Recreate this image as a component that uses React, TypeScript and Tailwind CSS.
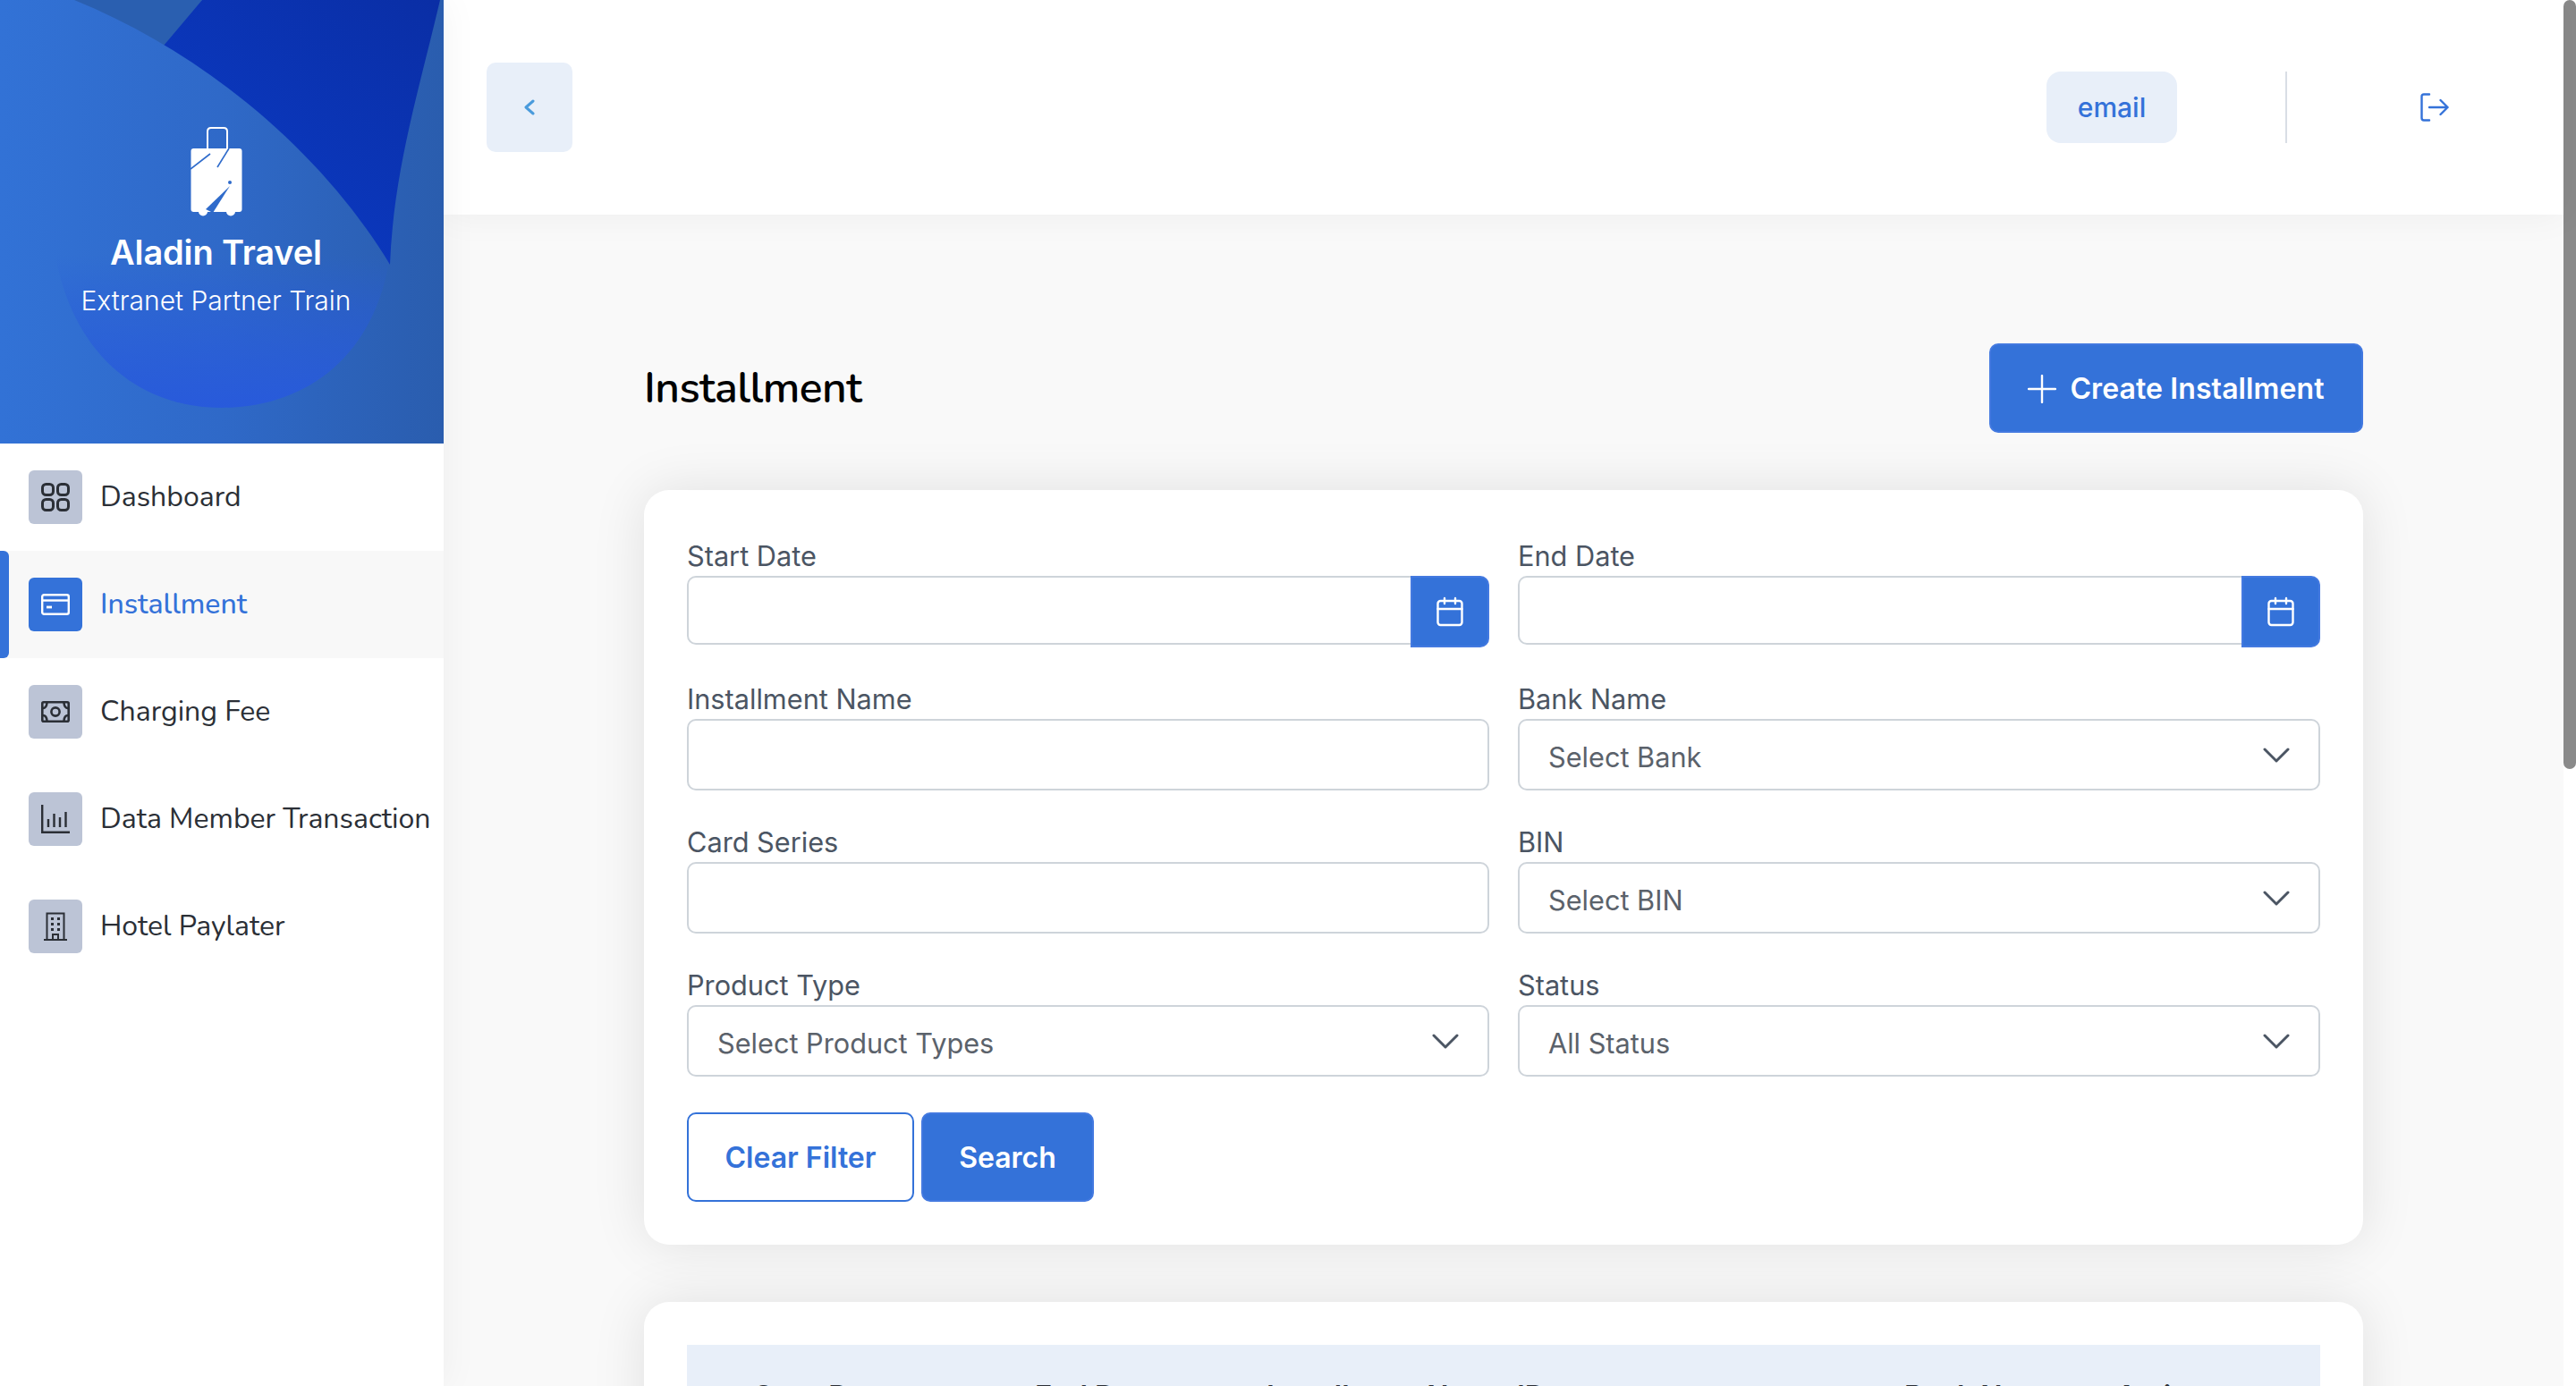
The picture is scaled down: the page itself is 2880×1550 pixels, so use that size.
import { Calendar } from "lucide-react";

const font = "font-['Nunito','Noto_Sans','Open_Sans',sans-serif]";
const uiFont = "font-['Inter',sans-serif]";

function BrandPanel() {
  return (
    <div className="relative h-[496px] overflow-hidden bg-[#2c62b4]">
      <svg className="absolute inset-0 h-full w-full" viewBox="0 0 496 496" preserveAspectRatio="none">
        <defs>
          <linearGradient id="base" gradientUnits="userSpaceOnUse" x1="0" y1="0" x2="496" y2="0">
            <stop offset="0" stopColor="#3272d6" />
            <stop offset="0.5" stopColor="#2f69c8" />
            <stop offset="1" stopColor="#2a5dae" />
          </linearGradient>
          <linearGradient id="deep" x1="0" y1="1" x2="1" y2="0">
            <stop offset="0" stopColor="#0b3dcb" />
            <stop offset="1" stopColor="#0a2ea5" />
          </linearGradient>
          <linearGradient id="blob" gradientUnits="userSpaceOnUse" x1="0" y1="285" x2="0" y2="456">
            <stop offset="0" stopColor="#285adb" stopOpacity="0" />
            <stop offset="0.35" stopColor="#285adb" stopOpacity="0.4" />
            <stop offset="1" stopColor="#285adb" stopOpacity="1" />
          </linearGradient>
        </defs>
        <rect width="496" height="496" fill="url(#base)" />
        <path d="M83 0 H226 L182 60 L83 60 Z" fill="#2a5fb0" />
        <path d="M226 0 H492 C470 95 440 190 436 296 L300 296 L150 90 Z" fill="url(#deep)" />
        <path d="M0 0 H83 C230 60 360 170 436 296 V496 H0 Z" fill="url(#base)" />
        <path d="M62 285 C80 390 150 456 248 456 C340 456 420 400 436 285 Z" fill="url(#blob)" />
      </svg>
      <div className="relative flex h-full flex-col items-center pt-[142px] pr-[13px]">
        <svg width="58" height="100" viewBox="0 0 58 100" fill="none">
          <path d="M19 25 V5 Q19 1 23 1 H37 Q41 1 41 5 V25" stroke="#fff" strokeWidth="2" />
          <rect x="0.5" y="24" width="57" height="71" rx="3" fill="#fff" />
          <circle cx="14" cy="94.5" r="5" fill="#fff" />
          <circle cx="45" cy="94.5" r="5" fill="#fff" />
          <path d="M22 30 L0 47" stroke="#2f6bcb" strokeWidth="1.6" />
          <path d="M43 24 L30 45" stroke="#2f6bcb" strokeWidth="1.6" />
          <path d="M44 66 L25 96 L17 92 Z" fill="#2f6bcb" />
          <circle cx="44" cy="62" r="2" fill="#2f6bcb" />
        </svg>
        <div className={`mt-[17px] ${uiFont} text-[38px] leading-[46px] font-semibold tracking-[-0.15px] text-white`}>Aladin Travel</div>
        <div className={`mt-[12px] ${uiFont} text-[30px] leading-[38px] font-light text-white`}>Extranet Partner Train</div>
      </div>
    </div>
  );
}

function GridIcon() {
  return (
    <svg width="32" height="32" viewBox="0 0 32 32" fill="none" stroke="#2b2f36" strokeWidth="3">
      <rect x="1.5" y="1.5" width="12" height="12" rx="4" />
      <rect x="18.5" y="1.5" width="12" height="12" rx="4" />
      <rect x="1.5" y="18.5" width="12" height="12" rx="4" />
      <rect x="18.5" y="18.5" width="12" height="12" rx="4" />
    </svg>
  );
}

function CardIcon() {
  return (
    <svg width="32" height="24" viewBox="0 0 32 24" fill="none" stroke="#fff" strokeWidth="2.4">
      <rect x="1.2" y="1.2" width="29.6" height="21.6" rx="2" />
      <path d="M1 7.5 H31" />
      <path d="M6 15 H12" strokeWidth="2.8" />
    </svg>
  );
}

function MoneyIcon() {
  return (
    <svg width="32" height="24" viewBox="0 0 32 24" fill="none" stroke="#2b2f36" strokeWidth="2.6">
      <rect x="1.3" y="1.3" width="29.4" height="21.4" rx="1.5" />
      <circle cx="16" cy="12" r="4.6" />
      <path d="M2 8 Q6 8 6.5 2 M25.5 2 Q26 8 30 8 M2 16 Q6 16 6.5 22 M25.5 22 Q26 16 30 16" />
    </svg>
  );
}

function ChartIcon() {
  return (
    <svg width="32" height="32" viewBox="0 0 32 32" fill="none" stroke="#2b2f36" strokeWidth="2.4">
      <path d="M1.2 0 V30.8 H32" />
      <path d="M8 16 V25 M14.5 10 V25 M21 14 V25 M27.5 8 V25" />
    </svg>
  );
}

function HotelIcon() {
  return (
    <svg width="26" height="32" viewBox="0 0 26 32" fill="none" stroke="#2b2f36" strokeWidth="2">
      <path d="M3.5 31 V1.5 H22.5 V31" />
      <path d="M0 31 H26" />
      <path d="M10 31 V25 H16 V31" />
      <g stroke="none" fill="#2b2f36">
        <rect x="8" y="6" width="3" height="3" />
        <rect x="15" y="6" width="3" height="3" />
        <rect x="8" y="12" width="3" height="3" />
        <rect x="15" y="12" width="3" height="3" />
        <rect x="8" y="18" width="3" height="3" />
        <rect x="15" y="18" width="3" height="3" />
      </g>
    </svg>
  );
}

function Chevron() {
  return (
    <svg width="30" height="17" viewBox="0 0 30 17" fill="none" stroke="#4b5563" strokeWidth="3" strokeLinecap="round" strokeLinejoin="round">
      <path d="M2 2 L15 15 L28 2" />
    </svg>
  );
}

const navItems = [
  { label: "Dashboard", icon: <GridIcon /> },
  { label: "Installment", icon: <CardIcon />, active: true },
  { label: "Charging Fee", icon: <MoneyIcon /> },
  { label: "Data Member Transaction", icon: <ChartIcon /> },
  { label: "Hotel Paylater", icon: <HotelIcon /> },
];

function Sidebar() {
  return (
    <aside className={`relative z-10 w-[496px] shrink-0 bg-white shadow-[0_0_40px_rgba(0,0,0,0.05)] ${font}`}>
      <BrandPanel />
      <nav>
        {navItems.map((item) => (
          <div
            key={item.label}
            className={`relative flex h-[120px] items-center gap-[20px] pl-[32px] ${item.active ? "bg-[#f8f8f8]" : ""}`}
          >
            {item.active && <span className="absolute top-0 left-0 h-full w-[10px] rounded-r-[6px] bg-[#3472d9]" />}
            <span
              className={`flex h-[60px] w-[60px] items-center justify-center rounded-[6px] ${item.active ? "bg-[#3472d9]" : "bg-[#bcc4d6]"}`}
            >
              {item.icon}
            </span>
            <span className={`text-[32px] leading-[40px] whitespace-nowrap ${item.active ? "font-medium text-[#3472d9]" : "text-[#2b2f36]"}`}>
              {item.label}
            </span>
          </div>
        ))}
      </nav>
    </aside>
  );
}

function Field({ label, children }: { label: string; children: React.ReactNode }) {
  return (
    <div>
      <div className={`${uiFont} text-[30.7px] leading-[36px] text-[#4b5563]`}>{label}</div>
      <div className="mt-[4px]">{children}</div>
    </div>
  );
}

function TextBox() {
  return <div className="h-[80px] rounded-[10px] border-2 border-[#ced4da] bg-white" />;
}

function DateBox() {
  return (
    <div className="flex h-[80px] items-start">
      <div className="h-[77px] flex-1 rounded-l-[10px] border-2 border-r-0 border-[#ced4da] bg-white" />
      <div className="flex h-[80px] w-[88px] items-center justify-center rounded-r-[10px] border-2 border-[#4379e0] bg-[#3472d9]">
        <Calendar size={36} strokeWidth={1.6} color="#fff" />
      </div>
    </div>
  );
}

function SelectBox({ value }: { value: string }) {
  return (
    <div className="flex h-[80px] items-center justify-between rounded-[10px] border-2 border-[#ced4da] bg-white pr-[32px] pl-[32px]">
      <span className={`pt-[6px] ${uiFont} text-[30.7px] leading-[40px] text-[#5b626b]`}>{value}</span>
      <Chevron />
    </div>
  );
}

function Header() {
  return (
    <header className="relative flex h-[240px] items-center justify-between bg-white pr-[128px] pl-[48px] shadow-[0_0_40px_rgba(0,0,0,0.05)]">
      <button className="flex h-[100px] w-[96px] items-center justify-center rounded-[10px] bg-[#e8eff9]">
        <svg width="14" height="18" viewBox="0 0 14 18" fill="none" stroke="#4a9bdc" strokeWidth="3" strokeLinecap="round" strokeLinejoin="round">
          <path d="M11 2 L3 9 L11 16" />
        </svg>
      </button>
      <div className="flex items-center">
        <div className={`flex h-[80px] w-[146px] items-center justify-center rounded-[16px] bg-[#e8eff9] ${uiFont} text-[30px] font-medium text-[#3472d9]`}>
          email
        </div>
        <div className="ml-[121px] h-[80px] w-[2px] bg-[#d9dee5]" />
        <svg className="ml-[149px]" width="32" height="32" viewBox="0 0 32 32" fill="none" stroke="#3472d9" strokeWidth="2.4" strokeLinecap="round" strokeLinejoin="round">
          <path d="M10 1.5 H4 Q1.5 1.5 1.5 4 V28 Q1.5 30.5 4 30.5 H10" />
          <path d="M10 16 H30.5 M22.5 8 L30.5 16 L22.5 24" />
        </svg>
      </div>
    </header>
  );
}

const columns = [
  { label: "Start Date", w: "w-[314px]" },
  { label: "End Date", w: "w-[259px]" },
  { label: "Installment Name", w: "w-[280px]" },
  { label: "ID", w: "w-[433px]" },
  { label: "Bank Name", w: "w-[237px]" },
  { label: "Action", w: "w-[120px]" },
];

export default function App() {
  return (
    <div className={`flex h-[1550px] w-[2880px] overflow-hidden bg-[#f9f9f9] ${font}`}>
      <Sidebar />
      <div className="flex min-w-0 flex-1">
        <main className="min-w-0 flex-1">
          <Header />
          <div className="px-[224px] pt-[144px]">
            <div className="flex items-center justify-between">
              <h1 className="text-[48px] leading-[60px] font-semibold tracking-[-0.5px] text-black">Installment</h1>
              <button className={`flex h-[100px] w-[418px] items-center justify-center gap-[15px] rounded-[10px] border-2 border-[#4379e0] bg-[#3472d9] pt-[2px] ${uiFont} text-[32px] font-semibold tracking-[0.1px] text-white`}>
                <svg width="32" height="32" viewBox="0 0 32 32" fill="none" stroke="#fff" strokeWidth="2.4" strokeLinecap="round">
                  <path d="M16 1 V31 M1 16 H31" />
                </svg>
                Create Installment
              </button>
            </div>
            <section className="mt-[64px] rounded-[28px] bg-white px-[48px] pt-[56px] pb-[48px] shadow-[0_0_60px_rgba(0,0,0,0.1)]">
              <div className="grid grid-cols-2 gap-x-[32px] gap-y-[40px]">
                <Field label="Start Date"><DateBox /></Field>
                <Field label="End Date"><DateBox /></Field>
                <Field label="Installment Name"><TextBox /></Field>
                <Field label="Bank Name"><SelectBox value="Select Bank" /></Field>
                <Field label="Card Series"><TextBox /></Field>
                <Field label="BIN"><SelectBox value="Select BIN" /></Field>
                <Field label="Product Type"><SelectBox value="Select Product Types" /></Field>
                <Field label="Status"><SelectBox value="All Status" /></Field>
              </div>
              <div className={`mt-[40px] flex gap-[8px] ${uiFont} text-[32px] font-semibold`}>
                <button className="h-[100px] w-[254px] rounded-[10px] border-2 border-[#3472d9] bg-white pt-[2px] text-[#3472d9]">Clear Filter</button>
                <button className="h-[100px] w-[193px] rounded-[10px] border-2 border-[#4379e0] bg-[#3472d9] pt-[2px] text-white">Search</button>
              </div>
            </section>
            <section className="mt-[64px] rounded-[28px] bg-white p-[48px] shadow-[0_0_60px_rgba(0,0,0,0.1)]">
              <div className={`flex h-[200px] bg-[#e8eff9] pt-[38px] pl-[75px] ${uiFont} text-[32px] leading-[40px] font-semibold text-[#2b2f36]`}>
                {columns.map((c) => (
                  <div key={c.label} className={`${c.w} shrink-0 whitespace-nowrap`}>{c.label}</div>
                ))}
              </div>
            </section>
          </div>
        </main>
        <div className="w-[14px] shrink-0 bg-white">
          <div className="h-[860px] rounded-[7px] bg-[#8a8a8a]" />
        </div>
      </div>
    </div>
  );
}
